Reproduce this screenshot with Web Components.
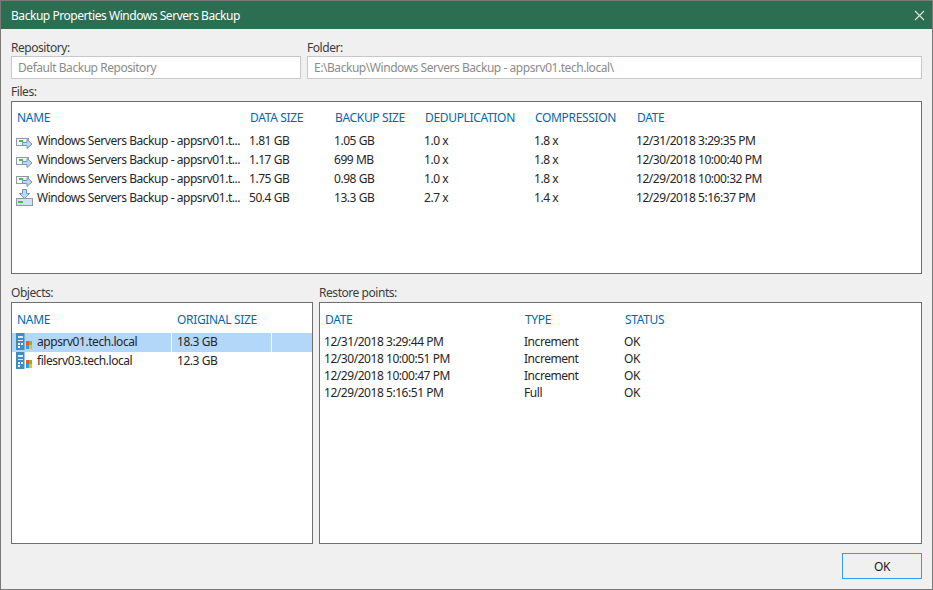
<!DOCTYPE html>
<html>
<head>
<meta charset="utf-8">
<title>Backup Properties</title>
<style>
  html, body { margin: 0; height: 100%; background: #f0f0f0; }
  body { font: 12px "Noto Sans", sans-serif; letter-spacing: -0.45px; color: #262626; }
</style>
</head>
<body>
<template id="icon-inc">
  <svg width="20" height="17" viewBox="0 0 20 17">
    <rect x="0.5" y="6.5" width="12" height="7" fill="#f4f8fb" stroke="#8e9aa4"/>
    <rect x="3" y="8" width="4" height="2" fill="#45c04a"/>
    <path d="M6.5 10.5h4.5v-3l5 4.5-5 4.5v-3h-4.5z" fill="#bcdaf5" stroke="#7396b5"/>
  </svg>
</template>
<template id="icon-full">
  <svg width="20" height="17" viewBox="0 0 20 17">
    <rect x="0.5" y="9.5" width="16" height="7" fill="#cfe3f5" stroke="#8e9aa4"/>
    <rect x="2" y="12" width="5" height="2" fill="#45c04a"/>
    <path d="M6.5 0.5h4v4h3l-5 5-5-5h3z" fill="#bcdaf5" stroke="#7396b5"/>
  </svg>
</template>
<template id="icon-server">
  <svg width="20" height="17" viewBox="0 0 20 17">
    <rect x="0" y="0" width="8.5" height="17" fill="#3f8dc4"/>
    <rect x="2" y="3" width="5" height="2" fill="#dcebf6"/>
    <rect x="2" y="7" width="5" height="1" fill="#dcebf6"/>
    <rect x="2" y="10" width="2" height="2" fill="#fff"/>
    <rect x="5" y="10" width="2" height="2" fill="#fff"/>
    <rect x="2" y="13" width="2" height="2" fill="#fff"/>
    <rect x="10" y="8" width="3" height="4" fill="#f2552a"/>
    <rect x="13" y="8" width="3" height="4" fill="#7fba2a"/>
    <rect x="10" y="12" width="3" height="4" fill="#2f9fe0"/>
    <rect x="13" y="12" width="3" height="4" fill="#fdb813"/>
  </svg>
</template>

<backup-dialog heading="Backup Properties Windows Servers Backup">
  <form-row>
    <text-field label="Repository:" value="Default Backup Repository" style="width:290px"></text-field>
    <text-field label="Folder:" value="E:\Backup\Windows Servers Backup - appsrv01.tech.local\" style="flex:1"></text-field>
  </form-row>
  <list-box id="files" label="Files:" height="173" style="margin-top:5px"></list-box>
  <form-row style="margin-top:11px">
    <list-box id="objects" label="Objects:" height="242" style="width:302px"></list-box>
    <list-box id="points" label="Restore points:" height="242" style="flex:1"></list-box>
  </form-row>
  <dialog-button slot="footer">OK</dialog-button>
</backup-dialog>

<script>
class BackupDialog extends HTMLElement {
  constructor() {
    super();
    this.attachShadow({ mode: "open" });
  }

  connectedCallback() {
    this.shadowRoot.innerHTML = `
    <style>
      :host {
        display: flex;
        flex-direction: column;
        box-sizing: border-box;
        width: 933px;
        height: 590px;
        border: 1px solid #7a7a7a;
        background: #f0f0f0;
      }
      .title {
        display: flex;
        align-items: center;
        justify-content: space-between;
        height: 28px;
        flex: none;
        padding: 0 7px 0 10px;
        background: #2c6e52;
        color: #fff;
      }
      .content { flex: 1; padding: 11px 10px 0 10px; }
      .footer { display: flex; justify-content: flex-end; padding: 0 10px 10px; }
      svg { display: block; }
    </style>
    <div class="title">
      <span>${this.getAttribute("heading")}</span>
      <svg width="11" height="11" viewBox="0 0 11 11"><path d="M1 1l9 9M10 1l-9 9" stroke="#d9e6e0" stroke-width="1.1" fill="none"/></svg>
    </div>
    <div class="content"><slot></slot></div>
    <div class="footer"><slot name="footer"></slot></div>`;
  }
}

class FormRow extends HTMLElement {
  constructor() {
    super();
    this.attachShadow({ mode: "open" });
    this.shadowRoot.innerHTML = `
    <style>:host { display: flex; gap: 6px; }</style>
    <slot></slot>`;
  }
}

class TextField extends HTMLElement {
  constructor() {
    super();
    this.attachShadow({ mode: "open" });
  }

  connectedCallback() {
    this.shadowRoot.innerHTML = `
    <style>
      :host { display: block; color: #3c3c3c; }
      label { display: block; height: 16px; line-height: 16px; }
      div {
        box-sizing: border-box;
        height: 23px;
        line-height: 21px;
        padding: 0 6px;
        border: 1px solid #c8c8c8;
        background: #fff;
        color: #8c8c8c;
        white-space: nowrap;
      }
    </style>
    <label>${this.getAttribute("label")}</label>
    <div>${this.getAttribute("value")}</div>`;
  }
}

class ListBox extends HTMLElement {
  constructor() {
    super();
    this.attachShadow({ mode: "open" });
  }

  connectedCallback() {
    this.shadowRoot.innerHTML = `
    <style>
      :host { display: block; }
      label { display: block; height: 17px; line-height: 16px; color: #3c3c3c; }
      .box {
        box-sizing: border-box;
        height: ${this.getAttribute("height")}px;
        border: 1px solid #6e6e6e;
        background: #fff;
        overflow: hidden;
      }
      .head, .row { display: grid; grid-template-columns: var(--cols); align-items: center; }
      .head {
        box-sizing: border-box;
        height: var(--head-h);
        padding-top: var(--head-top);
        color: #0068b4;
        letter-spacing: -0.33px;
      }
      .head span { padding-left: var(--head-pad); }
      .head span:first-child { padding-left: 5px; }
      .row { height: var(--row-h); color: #262626; white-space: nowrap; }
      .row > span {
        box-sizing: border-box;
        overflow: hidden;
        padding-left: var(--pad);
        padding-bottom: var(--text-up);
        display: flex;
        align-items: center;
        height: 100%;
      }
      .row > span:has(.ico) { padding-left: 5px; }
      .row.sel { background: #b3d7f8; }
      .row.sel > span + span { border-left: 1px solid #fff; padding-left: calc(var(--pad) - 1px); }
      .ico { flex: none; margin-right: 1px; margin-left: -1px; }
      svg { display: block; }
    </style>
    <label>${this.getAttribute("label")}</label>
    <div class="box"><div class="head"></div><div class="rows"></div></div>`;
  }

  setData(opts) {
    this.style.setProperty("--cols", opts.cols);
    this.style.setProperty("--head-h", opts.headH + "px");
    this.style.setProperty("--head-top", (opts.headTop || 0) + "px");
    this.style.setProperty("--head-pad", opts.headPad + "px");
    this.style.setProperty("--row-h", opts.rowH + "px");
    this.style.setProperty("--pad", opts.pad + "px");
    this.style.setProperty("--text-up", (opts.textUp || 0) + "px");
    const root = this.shadowRoot;
    root.querySelector(".head").innerHTML = opts.head.map(h => `<span>${h}</span>`).join("");
    const rows = root.querySelector(".rows");
    opts.rows.forEach((r, i) => {
      const row = document.createElement("div");
      row.className = "row" + (opts.selected === i ? " sel" : "");
      r.cells.forEach((c, j) => {
        const cell = document.createElement("span");
        if (j === 0 && r.icon) {
          const ico = document.createElement("span");
          ico.className = "ico";
          ico.append(document.getElementById(r.icon).content.cloneNode(true));
          cell.append(ico);
        }
        cell.append(c);
        row.append(cell);
      });
      rows.append(row);
    });
  }
}

class DialogButton extends HTMLElement {
  constructor() {
    super();
    this.attachShadow({ mode: "open" });
    this.shadowRoot.innerHTML = `
    <style>
      :host {
        display: flex;
        align-items: center;
        justify-content: center;
        box-sizing: border-box;
        width: 80px;
        height: 26px;
        border: 1px solid #3c96f0;
        color: #1a1a1a;
      }
    </style>
    <slot></slot>`;
  }
}

customElements.define("backup-dialog", BackupDialog);
customElements.define("form-row", FormRow);
customElements.define("text-field", TextField);
customElements.define("list-box", ListBox);
customElements.define("dialog-button", DialogButton);

const fileName = "Windows Servers Backup - appsrv01.t...";
document.getElementById("files").setData({
  cols: "232px 85px 90px 110px 102px 1fr",
  headH: 29, headTop: 1, rowH: 19, pad: 5, headPad: 6,
  head: ["NAME", "DATA SIZE", "BACKUP SIZE", "DEDUPLICATION", "COMPRESSION", "DATE"],
  rows: [
    { icon: "icon-inc", cells: [fileName, "1.81 GB", "1.05 GB", "1.0 x", "1.8 x", "12/31/2018 3:29:35 PM"] },
    { icon: "icon-inc", cells: [fileName, "1.17 GB", "699 MB", "1.0 x", "1.8 x", "12/30/2018 10:00:40 PM"] },
    { icon: "icon-inc", cells: [fileName, "1.75 GB", "0.98 GB", "1.0 x", "1.8 x", "12/29/2018 10:00:32 PM"] },
    { icon: "icon-full", cells: [fileName, "50.4 GB", "13.3 GB", "2.7 x", "1.4 x", "12/29/2018 5:16:37 PM"] }
  ]
});
document.getElementById("objects").setData({
  cols: "159px 100px 1fr",
  headH: 30, headTop: 2, rowH: 19, pad: 6, headPad: 6, textUp: 2, selected: 0,
  head: ["NAME", "ORIGINAL SIZE", ""],
  rows: [
    { icon: "icon-server", cells: ["appsrv01.tech.local", "18.3 GB", ""] },
    { icon: "icon-server", cells: ["filesrv03.tech.local", "12.3 GB", ""] }
  ]
});
document.getElementById("points").setData({
  cols: "200px 100px 1fr",
  headH: 30, headTop: 2, rowH: 17, pad: 4, headPad: 5,
  head: ["DATE", "TYPE", "STATUS"],
  rows: [
    { cells: ["12/31/2018 3:29:44 PM", "Increment", "OK"] },
    { cells: ["12/30/2018 10:00:51 PM", "Increment", "OK"] },
    { cells: ["12/29/2018 10:00:47 PM", "Increment", "OK"] },
    { cells: ["12/29/2018 5:16:51 PM", "Full", "OK"] }
  ]
});
</script>
</body>
</html>
